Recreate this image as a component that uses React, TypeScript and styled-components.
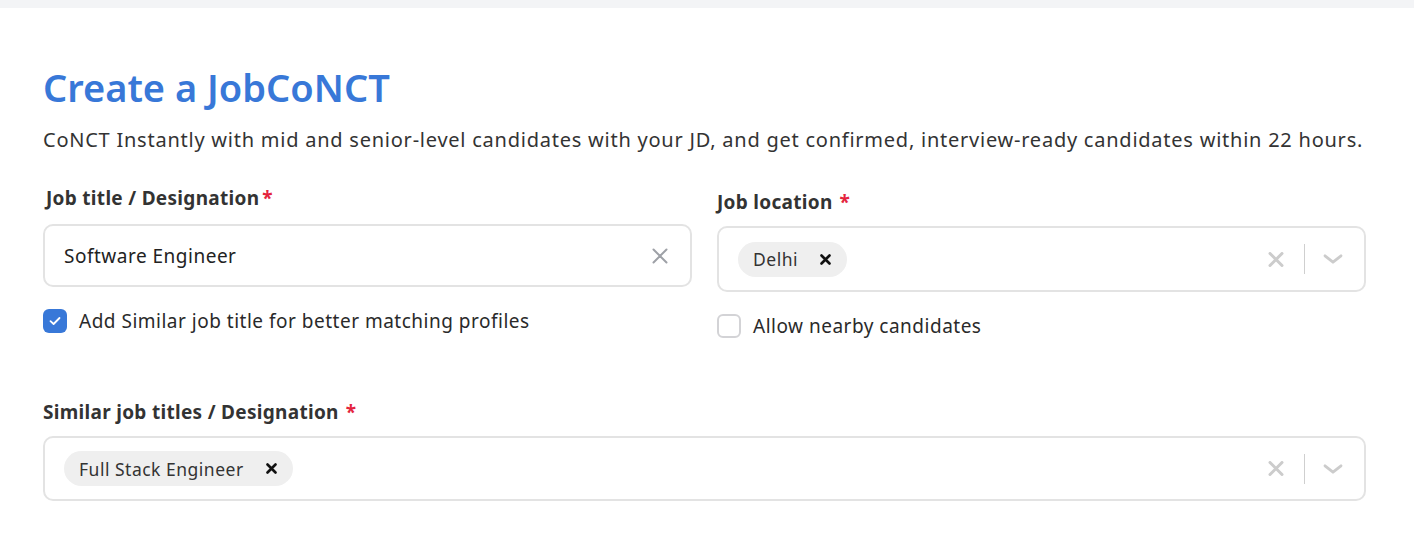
import React from "react";
import styled, { createGlobalStyle } from "styled-components";

const GlobalStyle = createGlobalStyle`
  html, body { margin: 0; padding: 0; background: #ffffff; }
  body { font-family: "Noto Sans", "Open Sans", sans-serif; color: #2f2f2f; }
  * { box-sizing: border-box; }
`;

const TopStrip = styled.div`
  height: 8px;
  background: #f3f4f6;
`;

const Main = styled.main`
  padding: 53px 48px 30px 43px;
`;

const Title = styled.h1`
  margin: 0;
  font-size: 38px;
  line-height: 52px;
  font-weight: 600;
  color: #3878d8;
`;

const Subtitle = styled.p`
  margin: 13px 0 0;
  font-size: 20px;
  line-height: 28px;
  letter-spacing: 0.76px;
  white-space: nowrap;
  color: #333333;
`;

const Grid = styled.div`
  display: grid;
  grid-template-columns: 1fr 1fr;
  column-gap: 25px;
  margin-top: 32px;
`;

const Column = styled.div<{ $offset?: number }>`
  display: flex;
  flex-direction: column;
  padding-top: ${(p) => p.$offset ?? 0}px;
`;

const Label = styled.label<{ $indent?: number; $gap?: number }>`
  display: block;
  font-size: 19px;
  line-height: 24px;
  font-weight: 700;
  letter-spacing: 0.3px;
  color: #333333;
  padding-left: ${(p) => p.$indent ?? 0}px;
  margin-bottom: ${(p) => p.$gap ?? 12}px;
`;

const Star = styled.span<{ $gap?: number }>`
  color: #e4243d;
  margin-left: ${(p) => p.$gap ?? 7}px;
`;

const Box = styled.div<{ $height: number; $right?: number }>`
  display: flex;
  align-items: center;
  height: ${(p) => p.$height}px;
  border: 2px solid #e3e3e3;
  border-radius: 10px;
  background: #ffffff;
  padding: 0 ${(p) => p.$right ?? 22}px 0 19px;
`;

const InputText = styled.span`
  flex: 1;
  font-size: 19px;
  letter-spacing: 0.5px;
  color: #222222;
`;

const ChipArea = styled.div`
  flex: 1;
  display: flex;
  align-items: center;
`;

const Chip = styled.span`
  display: inline-flex;
  align-items: center;
  height: 35px;
  border-radius: 18px;
  background: #efefef;
  padding: 0 16px 0 15px;
  gap: 22px;
  font-size: 17.5px;
  letter-spacing: 0.5px;
  color: #333333;
`;

const Indicators = styled.div`
  display: flex;
  align-items: center;
`;

const Separator = styled.span`
  width: 1.5px;
  height: 30px;
  background: #cfcfcf;
  margin: 0 18px 0 20px;
`;

const CheckRow = styled.div<{ $top: number }>`
  display: flex;
  align-items: center;
  gap: 12px;
  margin-top: ${(p) => p.$top}px;
  font-size: 19px;
  letter-spacing: 0.5px;
  color: #2a2a2a;
`;

const CheckBox = styled.span<{ $checked?: boolean }>`
  width: 24px;
  height: 24px;
  border-radius: 6px;
  display: inline-flex;
  align-items: center;
  justify-content: center;
  background: ${(p) => (p.$checked ? "#3878d8" : "#ffffff")};
  border: ${(p) => (p.$checked ? "none" : "2px solid #d3d3d6")};
`;

const FullField = styled.div`
  margin-top: 61px;
`;

const ThinX = () => (
  <svg width="16" height="16" viewBox="0 0 16 16">
    <path d="M1.5 1.5 L14.5 14.5 M14.5 1.5 L1.5 14.5" stroke="#9ea1a7" strokeWidth="2" strokeLinecap="round" />
  </svg>
);

const ChipX = () => (
  <svg width="11" height="11" viewBox="0 0 11 11">
    <path d="M1.5 1.5 L9.5 9.5 M9.5 1.5 L1.5 9.5" stroke="#111111" strokeWidth="2.6" strokeLinecap="round" />
  </svg>
);

const Cross = () => (
  <svg width="16" height="15" viewBox="0 0 16 15">
    <path d="M2 1.5 L14 13.5 M14 1.5 L2 13.5" stroke="#cccccc" strokeWidth="3" strokeLinecap="round" />
  </svg>
);

const Chevron = () => (
  <svg width="20" height="10" viewBox="0 0 20 10">
    <path d="M2 1.8 L10 8.2 L18 1.8" stroke="#cccccc" strokeWidth="2.8" fill="none" strokeLinecap="round" strokeLinejoin="round" />
  </svg>
);

const Tick = () => (
  <svg width="12" height="10" viewBox="0 0 12 10">
    <path d="M1.5 5.2 L4.6 8 L10.5 2" stroke="#ffffff" strokeWidth="1.8" fill="none" strokeLinecap="round" strokeLinejoin="round" />
  </svg>
);

const SelectIndicators = () => (
  <Indicators>
    <Cross />
    <Separator />
    <Chevron />
  </Indicators>
);

export default function App() {
  return (
    <>
      <GlobalStyle />
      <TopStrip />
      <Main>
        <Title>Create a JobCoNCT</Title>
        <Subtitle>
          CoNCT Instantly with mid and senior-level candidates with your JD, and get confirmed, interview-ready candidates within 22 hours.
        </Subtitle>
        <Grid>
          <Column>
            <Label $indent={3} $gap={14}>
              Job title / Designation<Star $gap={3}>*</Star>
            </Label>
            <Box $height={63}>
              <InputText>Software Engineer</InputText>
              <ThinX />
            </Box>
            <CheckRow $top={21}>
              <CheckBox $checked>
                <Tick />
              </CheckBox>
              Add Similar job title for better matching profiles
            </CheckRow>
          </Column>
          <Column $offset={4}>
            <Label>
              Job location<Star>*</Star>
            </Label>
            <Box $height={66} $right={21}>
              <ChipArea>
                <Chip>
                  Delhi
                  <ChipX />
                </Chip>
              </ChipArea>
              <SelectIndicators />
            </Box>
            <CheckRow $top={21}>
              <CheckBox />
              Allow nearby candidates
            </CheckRow>
          </Column>
        </Grid>
        <FullField>
          <Label>
            Similar job titles / Designation<Star>*</Star>
          </Label>
          <Box $height={65} $right={21}>
            <ChipArea>
              <Chip>
                Full Stack Engineer
                <ChipX />
              </Chip>
            </ChipArea>
            <SelectIndicators />
          </Box>
        </FullField>
      </Main>
    </>
  );
}
